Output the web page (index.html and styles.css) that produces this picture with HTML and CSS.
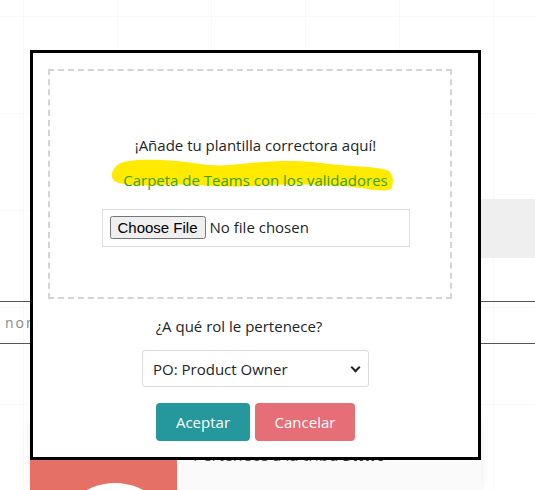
FILE: index.html
```html
<!DOCTYPE html>
<html lang="es">
<head>
<meta charset="utf-8">
<title>Plantilla correctora</title>
<link rel="stylesheet" href="styles.css">
</head>
<body>
<div class="page">
  <div class="band"></div>
  <input class="search" type="text" placeholder="nombre del validador">
  <div class="card">
    <div class="card-img"><span class="avatar"></span></div>
    <div class="card-body">Pertenece a la tribu <b>Swift</b></div>
  </div>
</div>

<div class="modal">
  <div class="dropzone">
    <p class="drop-title">¡Añade tu plantilla correctora aquí!</p>
    <div class="link-wrap">
      <svg class="marker" width="284" height="36" viewBox="0 0 284 36">
        <path d="M3 12 C 6 4, 22 2, 50 3 C 80 4, 95 10, 118 8 C 148 5, 178 2, 210 6 C 240 10, 262 9, 276 13 C 283 17, 283 26, 280 32 C 272 36, 255 31, 232 29 C 202 27, 172 27, 140 29 C 108 31, 78 26, 48 28 C 28 29, 10 28, 3 24 C 0 20, 0 16, 3 12 Z" fill="#ffea00"/>
      </svg>
      <a class="link" href="#">Carpeta de Teams con los validadores</a>
    </div>
    <div class="file-box"><input class="file" type="file"></div>
  </div>
  <p class="role-label">¿A qué rol le pertenece?</p>
  <div class="select-wrap">
    <select class="role">
      <option>PO: Product Owner</option>
      <option>SM: Scrum Master</option>
      <option>DEV: Developer</option>
    </select>
  </div>
  <div class="actions">
    <button class="btn btn-ok">Aceptar</button>
    <button class="btn btn-cancel">Cancelar</button>
  </div>
</div>
</body>
</html>
```

FILE: styles.css
```css
* { box-sizing: border-box; }

html, body {
  margin: 0;
  padding: 0;
}

body {
  width: 535px;
  height: 490px;
  overflow: hidden;
  position: relative;
  font-family: "Open Sans", "Noto Sans", sans-serif;
  color: #212529;
  background-color: #fff;
  background-image:
    linear-gradient(to right, #f9f9f9 1px, transparent 1px),
    linear-gradient(to bottom, #f9f9f9 1px, transparent 1px);
  background-size: 94px 97px;
  background-position: 23px 16px;
}

.page {
  display: flex;
  flex-direction: column;
  height: 490px;
  overflow: hidden;
}

.band {
  flex: none;
  margin-top: 199px;
  margin-left: 33px;
  height: 59px;
  background: #efefef;
}

.search {
  flex: none;
  margin-top: 43px;
  height: 43px;
  width: 100%;
  border: 0;
  border-top: 1px solid #555;
  border-bottom: 1px solid #555;
  background: transparent;
  padding: 0 5px;
  font-family: "Open Sans", sans-serif;
  font-size: 14px;
  letter-spacing: 2px;
  outline: none;
}

.search::placeholder { color: #888; }

.card {
  flex: none;
  margin-top: 76px;
  margin-left: 30px;
  width: 451px;
  height: 70px;
  display: flex;
  background: #fafafa;
  box-shadow: 0 0 10px rgba(0, 0, 0, 0.08);
  overflow: hidden;
}

.card-img {
  width: 147px;
  background: #e57066;
  display: flex;
  justify-content: center;
  padding-top: 63px;
  padding-left: 22px;
}

.avatar {
  width: 120px;
  height: 120px;
  border-radius: 50%;
  background: #fff;
  flex: none;
}

.card-body {
  padding: 24px 0 0 16px;
  font-size: 16px;
  line-height: 22px;
  color: #555;
}

.card-body b { color: #333; }

.modal {
  position: absolute;
  left: 30px;
  top: 50px;
  width: 451px;
  height: 410px;
  border: 3px solid #000;
  background: #fff;
  padding: 16px 0 0 15px;
  display: flex;
  flex-direction: column;
}

.dropzone {
  flex: none;
  width: 404px;
  height: 230px;
  border: 2px dashed #d4d4d4;
  padding: 64px 0 0 11px;
  display: flex;
  flex-direction: column;
  align-items: center;
}

.drop-title {
  margin: 0;
  font-size: 15px;
  line-height: 20px;
}

.link-wrap {
  position: relative;
  margin-top: 15px;
  height: 20px;
  display: flex;
  justify-content: center;
}

.marker {
  position: absolute;
  left: -12px;
  top: -13px;
}

.link {
  position: relative;
  font-size: 15px;
  line-height: 20px;
  color: #3c9f17;
  text-decoration: none;
}

.file-box {
  margin-top: 19px;
  width: 308px;
  height: 38px;
  border: 1px solid #dedede;
  padding: 6px 0 0 7px;
  display: flex;
}

.file {
  font-family: "Open Sans", sans-serif;
  font-size: 15px;
  color: #212529;
}

.role-label {
  margin: 17px 0 0 -11px;
  text-align: center;
  width: 404px;
  font-size: 15px;
  line-height: 20px;
}

.select-wrap {
  position: relative;
  margin: 14px 0 0 94px;
  width: 227px;
  height: 37px;
}

.select-wrap::after {
  content: "";
  position: absolute;
  right: 10px;
  top: 14px;
  width: 5px;
  height: 5px;
  border-right: 2px solid #222;
  border-bottom: 2px solid #222;
  transform: rotate(45deg);
  pointer-events: none;
}

.role {
  appearance: none;
  -webkit-appearance: none;
  width: 100%;
  height: 100%;
  border: 1px solid #dcdcdc;
  border-radius: 3px;
  background: #fff;
  padding: 0 0 0 10px;
  font-family: "Open Sans", sans-serif;
  font-size: 15px;
  color: #212529;
}

.actions {
  margin: 16px 0 0 108px;
  display: flex;
  gap: 5px;
}

.btn {
  height: 38px;
  border: 0;
  border-radius: 4px;
  color: #fff;
  font-family: "Open Sans", sans-serif;
  font-size: 15px;
  padding: 0;
}

.btn-ok {
  width: 94px;
  background: #24989c;
}

.btn-cancel {
  width: 100px;
  background: #e66e76;
}
```
